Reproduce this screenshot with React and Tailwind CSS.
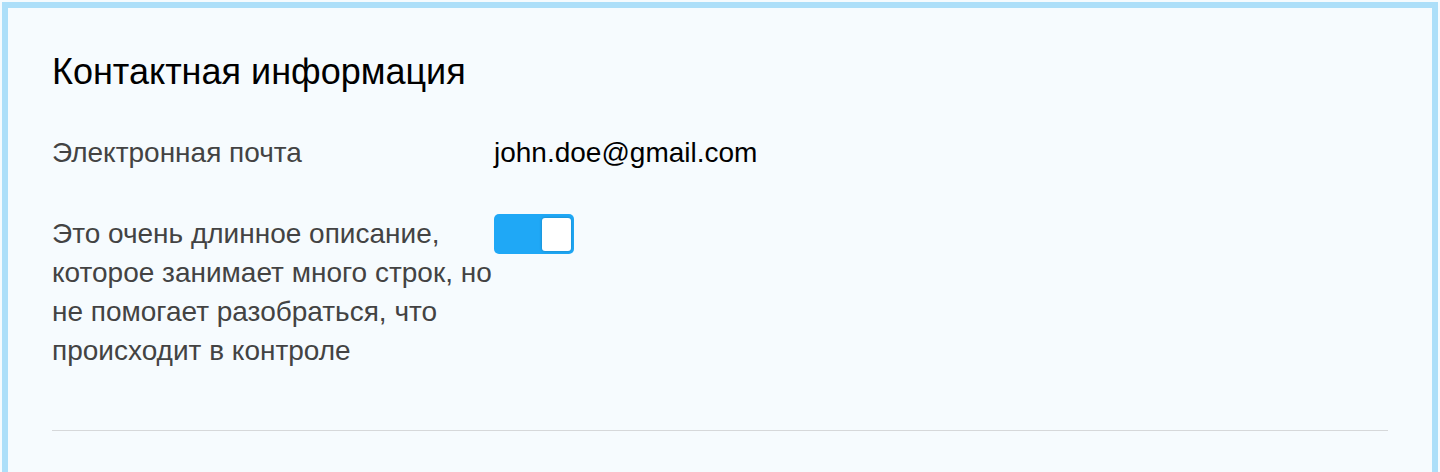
import React, { useState } from 'react';

const Toggle = ({ checked, onChange }) => (
  <button
    type="button"
    onClick={() => onChange(!checked)}
    className={`relative flex h-[40px] w-[80px] shrink-0 items-center rounded-[5px] p-[3px] transition-colors ${
      checked ? 'justify-end bg-[#1fa8f6]' : 'justify-start bg-[#d5dbe0]'
    }`}
  >
    <span className="block h-[33px] w-[29px] rounded-[3px] bg-white shadow-[0_0_3px_rgba(0,0,0,0.25)]" />
  </button>
);

const App = () => {
  const [enabled, setEnabled] = useState(true);

  return (
    <div className="h-[472px] bg-[#f6fbfe] p-[2px] font-['Liberation_Sans',Arial,sans-serif]">
      <div className="h-[480px] border-[6px] border-[#addff9] bg-[#f6fbfe] px-[44px] pt-[42px]">
        <h2 className="text-[36px] leading-[43px] text-black">Контактная информация</h2>

        <div className="mt-[40px] flex">
          <div className="w-[442px] shrink-0 text-[28px] leading-[39px] text-[#434343]">
            Электронная почта
          </div>
          <div className="text-[28px] leading-[39px] text-black">john.doe@gmail.com</div>
        </div>

        <div className="mt-[42px] flex">
          <div className="w-[442px] shrink-0 text-[28px] leading-[39px] text-[#434343]">
            Это очень длинное описание, которое занимает много строк, но не помогает разобраться, что происходит в контроле
          </div>
          <div>
            <Toggle checked={enabled} onChange={setEnabled} />
          </div>
        </div>

        <div className="mt-[60px] h-px bg-[#d6d8da]" />
      </div>
    </div>
  );
};

export default App;
